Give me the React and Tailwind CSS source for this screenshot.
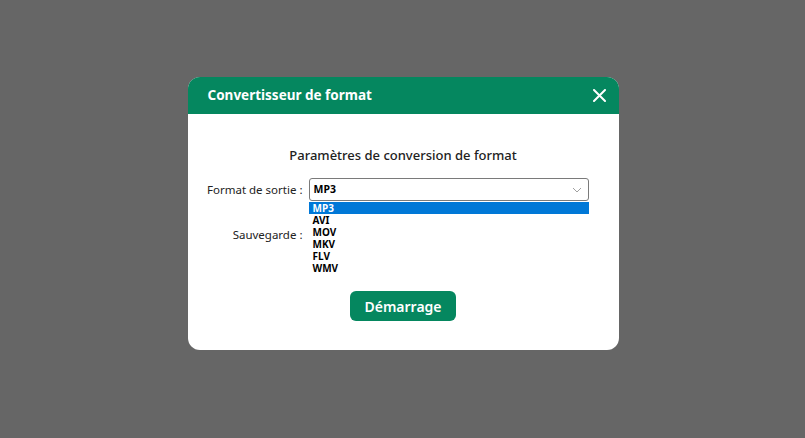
import React from 'react';

const formats = ['MP3', 'AVI', 'MOV', 'MKV', 'FLV', 'WMV'];

const App = () => {
  return (
    <div
      className="w-full h-[438px] bg-[#666666] flex items-start justify-center pt-[77px] pl-[1px]"
      style={{ fontFamily: '"Noto Sans", "Open Sans", sans-serif' }}
    >
      <div className="w-[431px] h-[273px] bg-white rounded-[12px] overflow-hidden flex flex-col">
        {/* Header */}
        <div className="h-[37px] shrink-0 bg-[#05875f] flex items-center justify-between pl-[20px] pr-[13px]">
          <span className="text-white font-bold text-[13.5px]">Convertisseur de format</span>
          <svg width="13" height="13" viewBox="0 0 13 13" className="text-white">
            <path d="M1 1L12 12M12 1L1 12" stroke="currentColor" strokeWidth="2" strokeLinecap="round" />
          </svg>
        </div>

        {/* Body */}
        <div className="flex-1 flex flex-col items-center pt-[32px]">
          <h2 className="text-[13px] font-medium text-[#222] leading-[18px]">
            Paramètres de conversion de format
          </h2>

          <div className="mt-[14px] flex flex-col gap-[22px] self-start ml-[19px]">
            <div className="flex items-center gap-[6px]">
              <label className="w-[96px] whitespace-nowrap text-right text-[11.5px] text-[#222]">Format de sortie :</label>
              <div className="relative w-[280px]">
                <div className="h-[23px] border border-[#7a7a7a] rounded-[3px] flex items-center justify-between pl-[4px] pr-[6px]">
                  <span className="text-[10.5px] font-bold text-black">MP3</span>
                  <svg width="10" height="6" viewBox="0 0 10 6">
                    <path d="M1 1L5 5L9 1" stroke="#a0a0a0" strokeWidth="1" fill="none" />
                  </svg>
                </div>
                <ul className="absolute left-0 top-[24px] w-full bg-white z-10">
                  {formats.map((f, i) => (
                    <li
                      key={f}
                      className={`h-[12px] leading-[12px] overflow-hidden pl-[4px] text-[10px] font-bold ${
                        i === 0 ? 'bg-[#0078d7] text-white' : 'text-black'
                      }`}
                    >
                      {f}
                    </li>
                  ))}
                </ul>
              </div>
            </div>

            <div className="flex items-center gap-[6px]">
              <label className="w-[96px] whitespace-nowrap text-right text-[11.5px] text-[#222]">Sauvegarde :</label>
              <div className="w-[280px] h-[23px] border border-[#7a7a7a] rounded-[3px]" />
            </div>
          </div>

          <button className="mt-[45px] w-[106px] h-[30px] rounded-[6px] bg-[#05875f] text-white text-[14px] font-semibold">
            Démarrage
          </button>
        </div>
      </div>
    </div>
  );
};

export default App;
